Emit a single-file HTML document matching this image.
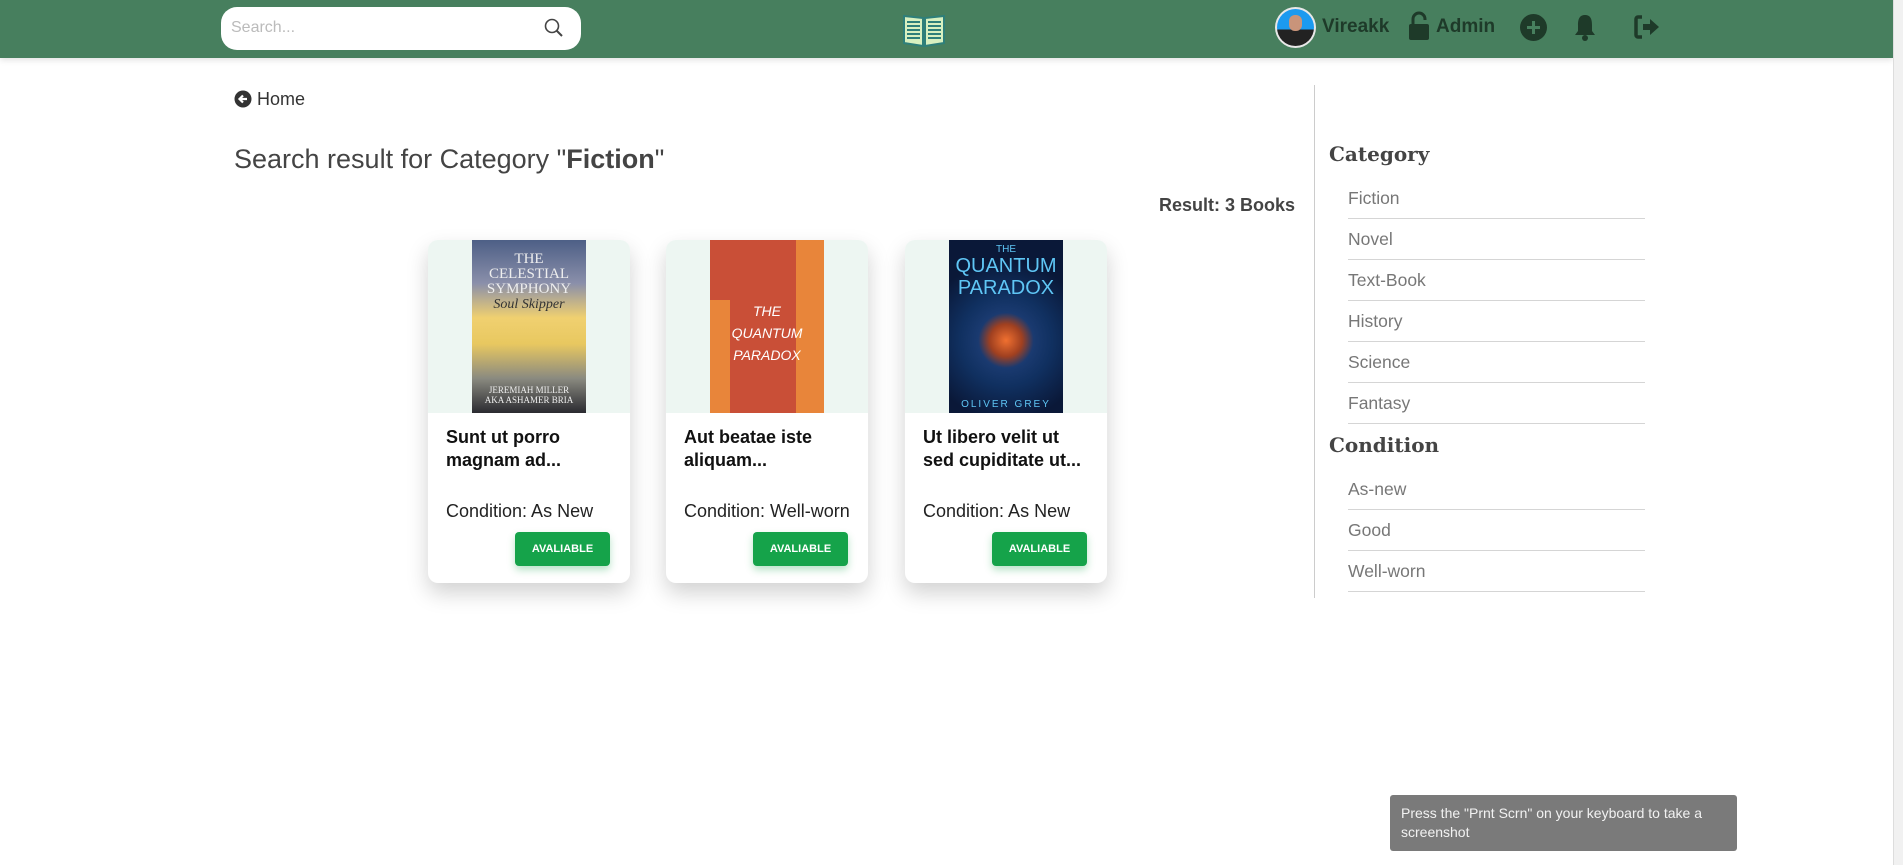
<!DOCTYPE html>
<html><head><meta charset="utf-8"><style>
*{box-sizing:border-box;margin:0;padding:0}
body{width:1903px;height:865px;position:relative;background:#fff;font-family:"Liberation Sans",sans-serif;overflow:hidden}
.abs{position:absolute}
.nav{left:0;top:0;width:1893px;height:58px;background:#477f5e;box-shadow:0 2px 6px rgba(0,0,0,.12)}
.sb{left:1893px;top:0;width:10px;height:865px;background:#f1f1f1;border-left:1px solid #ddd}
.search{left:221px;top:7px;width:360px;height:43px;background:#fff;border-radius:16px}
.search span{position:absolute;left:10px;top:12px;font-size:16px;color:#bbb}
.nt{font-weight:bold;font-size:19px;color:#1e3a29}
.card{width:202px;height:343px;top:240px;background:#fff;border-radius:10px;box-shadow:0 10px 22px rgba(0,0,0,.18);overflow:hidden}
.card .img{position:absolute;left:0;top:0;width:202px;height:173px;background:#edf6f2}
.card .cov{position:absolute;left:44px;top:0;width:114px;height:173px;overflow:hidden;text-align:center}
.card .t{position:absolute;left:18px;top:186px;width:165px;font-weight:bold;font-size:18px;line-height:23px;color:#111}
.card .c{position:absolute;left:18px;top:261px;font-size:18px;color:#222}
.card .b{position:absolute;left:87px;top:292px;width:95px;height:34px;background:#15a34a;border-radius:4px;color:#fff;font-size:11px;font-weight:bold;text-align:center;line-height:34px;box-shadow:0 4px 8px rgba(21,163,74,.3)}
.side h3{position:absolute;left:1329px;font-family:"DejaVu Serif","Liberation Serif",serif;font-weight:bold;font-size:20px;color:#444}
.it{position:absolute;left:1348px;width:297px;height:41px;border-bottom:1px solid #d5d5d5;font-size:17.5px;color:#777;line-height:40px}
</style></head><body>
<div class="abs nav"></div>
<div class="abs sb"></div>
<div class="abs search"><span>Search...</span>
<svg class="abs" style="left:323px;top:11px" width="20" height="20" viewBox="0 0 20 20"><circle cx="8" cy="8" r="6.5" fill="none" stroke="#444" stroke-width="1.6"/><path d="M12.5 12.5 L18 18" stroke="#444" stroke-width="2"/></svg></div>
<svg class="abs" style="left:901px;top:12px" width="46" height="36" viewBox="0 0 46 36"><path d="M3 4 L22 6 L22 34 L3 31Z" fill="#d8f0c0" stroke="#2e7f7a" stroke-width="2"/><path d="M43 4 L24 6 L24 34 L43 31Z" fill="#d8f0c0" stroke="#2e7f7a" stroke-width="2"/><g stroke="#2e7f7a" stroke-width="2"><path d="M6 10h13M6 14h13M6 18h13M6 22h13M6 26h13M27 10h13M27 14h13M27 18h13M27 22h13M27 26h13"/></g></svg>
<div class="abs" style="left:1275px;top:7px;width:41px;height:41px;border-radius:50%;background:#e8e8e8;padding:2px"><div style="width:37px;height:37px;border-radius:50%;background:linear-gradient(#1c9af0 0,#1c9af0 55%,#222 56%);position:relative;overflow:hidden"><div style="position:absolute;left:12px;top:6px;width:13px;height:16px;border-radius:6px;background:#c9947a"></div></div></div>
<div class="abs nt" style="left:1322px;top:16px">Vireakk</div>
<svg class="abs" style="left:1407px;top:11px" width="24" height="30" viewBox="0 0 24 30"><path d="M6 13 V8 a6 6 0 0 1 12 0 V9" fill="none" stroke="#1e3a29" stroke-width="3"/><rect x="2" y="13" width="20" height="16" rx="2" fill="#1e3a29"/></svg>
<div class="abs nt" style="left:1436px;top:16px">Admin</div>
<svg class="abs" style="left:1520px;top:14px" width="27" height="27" viewBox="0 0 27 27"><circle cx="13.5" cy="13.5" r="13.5" fill="#1e3a29"/><path d="M13.5 7v13M7 13.5h13" stroke="#477f5e" stroke-width="3"/></svg>
<svg class="abs" style="left:1574px;top:13px" width="22" height="28" viewBox="0 0 22 28"><path d="M11 2 C5 2 4 7 4 12 V18 L1 22 H21 L18 18 V12 C18 7 17 2 11 2Z" fill="#1e3a29"/><circle cx="11" cy="25" r="3" fill="#1e3a29"/></svg>
<svg class="abs" style="left:1633px;top:14px" width="28" height="26" viewBox="0 0 28 26"><path d="M9 3 H5 a2 2 0 0 0 -2 2 V21 a2 2 0 0 0 2 2 H9" fill="none" stroke="#1e3a29" stroke-width="3.5"/><path d="M10 10 H17 V5 L26 13 L17 21 V16 H10Z" fill="#1e3a29"/></svg>

<svg class="abs" style="left:234px;top:90px" width="18" height="18" viewBox="0 0 18 18"><circle cx="9" cy="9" r="8.5" fill="#333"/><path d="M13 9H6M9 5.5L5.5 9 9 12.5" stroke="#fff" stroke-width="2.2" fill="none"/></svg>
<div class="abs" style="left:257px;top:89px;font-size:18px;color:#333">Home</div>
<div class="abs" style="left:234px;top:144px;font-size:27px;color:#444">Search result for Category "<b>Fiction</b>"</div>
<div class="abs" style="left:1100px;width:195px;text-align:right;top:195px;font-size:18px;font-weight:bold;color:#444">Result: 3 Books</div>
<div class="abs" style="left:1314px;top:85px;width:1px;height:513px;background:#ccc"></div>

<div class="abs card" style="left:428px"><div class="img"></div><div class="cov" style="background:linear-gradient(#4d5f86 0,#8a8faa 25%,#f0d070 45%,#e8c860 60%,#8a8a80 80%,#2a2a30 100%);color:#eee;font-family:'Liberation Serif',serif"><div style="font-size:15px;margin-top:12px;line-height:15px">THE<br>CELESTIAL<br>SYMPHONY</div><div style="font-style:italic;font-size:14px;color:#333">Soul Skipper</div><div style="font-size:9px;margin-top:72px">JEREMIAH MILLER<br>AKA ASHAMER BRIA</div></div><div class="t">Sunt ut porro magnam ad...</div><div class="c">Condition: As New</div><div class="b">AVALIABLE</div></div>
<div class="abs card" style="left:666px"><div class="img"></div><div class="cov" style="background:#c94f37;color:#fff;font-style:italic"><div style="position:absolute;right:0;top:0;width:28px;height:173px;background:#e8853a"></div><div style="position:absolute;left:0;top:60px;width:20px;height:113px;background:#e8853a"></div><div style="font-size:14px;margin-top:60px;line-height:22px;position:relative">THE<br>QUANTUM<br>PARADOX</div></div><div class="t">Aut beatae iste aliquam...</div><div class="c">Condition: Well-worn</div><div class="b">AVALIABLE</div></div>
<div class="abs card" style="left:905px"><div class="img"></div><div class="cov" style="background:radial-gradient(circle at 50% 58%,#f07030 0,#a04020 14%,#1a3a70 24%,#103060 40%,#0a1838 70%);color:#5fc6f5"><div style="font-size:10px;margin-top:4px">THE</div><div style="font-size:20px;line-height:22px">QUANTUM<br>PARADOX</div><div style="font-size:10px;letter-spacing:2px;margin-top:100px">OLIVER GREY</div></div><div class="t">Ut libero velit ut sed cupiditate ut...</div><div class="c">Condition: As New</div><div class="b">AVALIABLE</div></div>

<div class="side"><h3 style="top:142px">Category</h3><h3 style="top:433px">Condition</h3></div>
<div class="it" style="top:178px">Fiction</div>
<div class="it" style="top:219px">Novel</div>
<div class="it" style="top:260px">Text-Book</div>
<div class="it" style="top:301px">History</div>
<div class="it" style="top:342px">Science</div>
<div class="it" style="top:383px">Fantasy</div>
<div class="it" style="top:469px">As-new</div>
<div class="it" style="top:510px">Good</div>
<div class="it" style="top:551px">Well-worn</div>

<div class="abs" style="left:1390px;top:795px;width:347px;height:56px;background:#7a7a7a;border-radius:3px;color:#f2f2f2;font-size:14px;line-height:19px;padding:9px 11px">Press the "Prnt Scrn" on your keyboard to take a screenshot</div>
</body></html>
